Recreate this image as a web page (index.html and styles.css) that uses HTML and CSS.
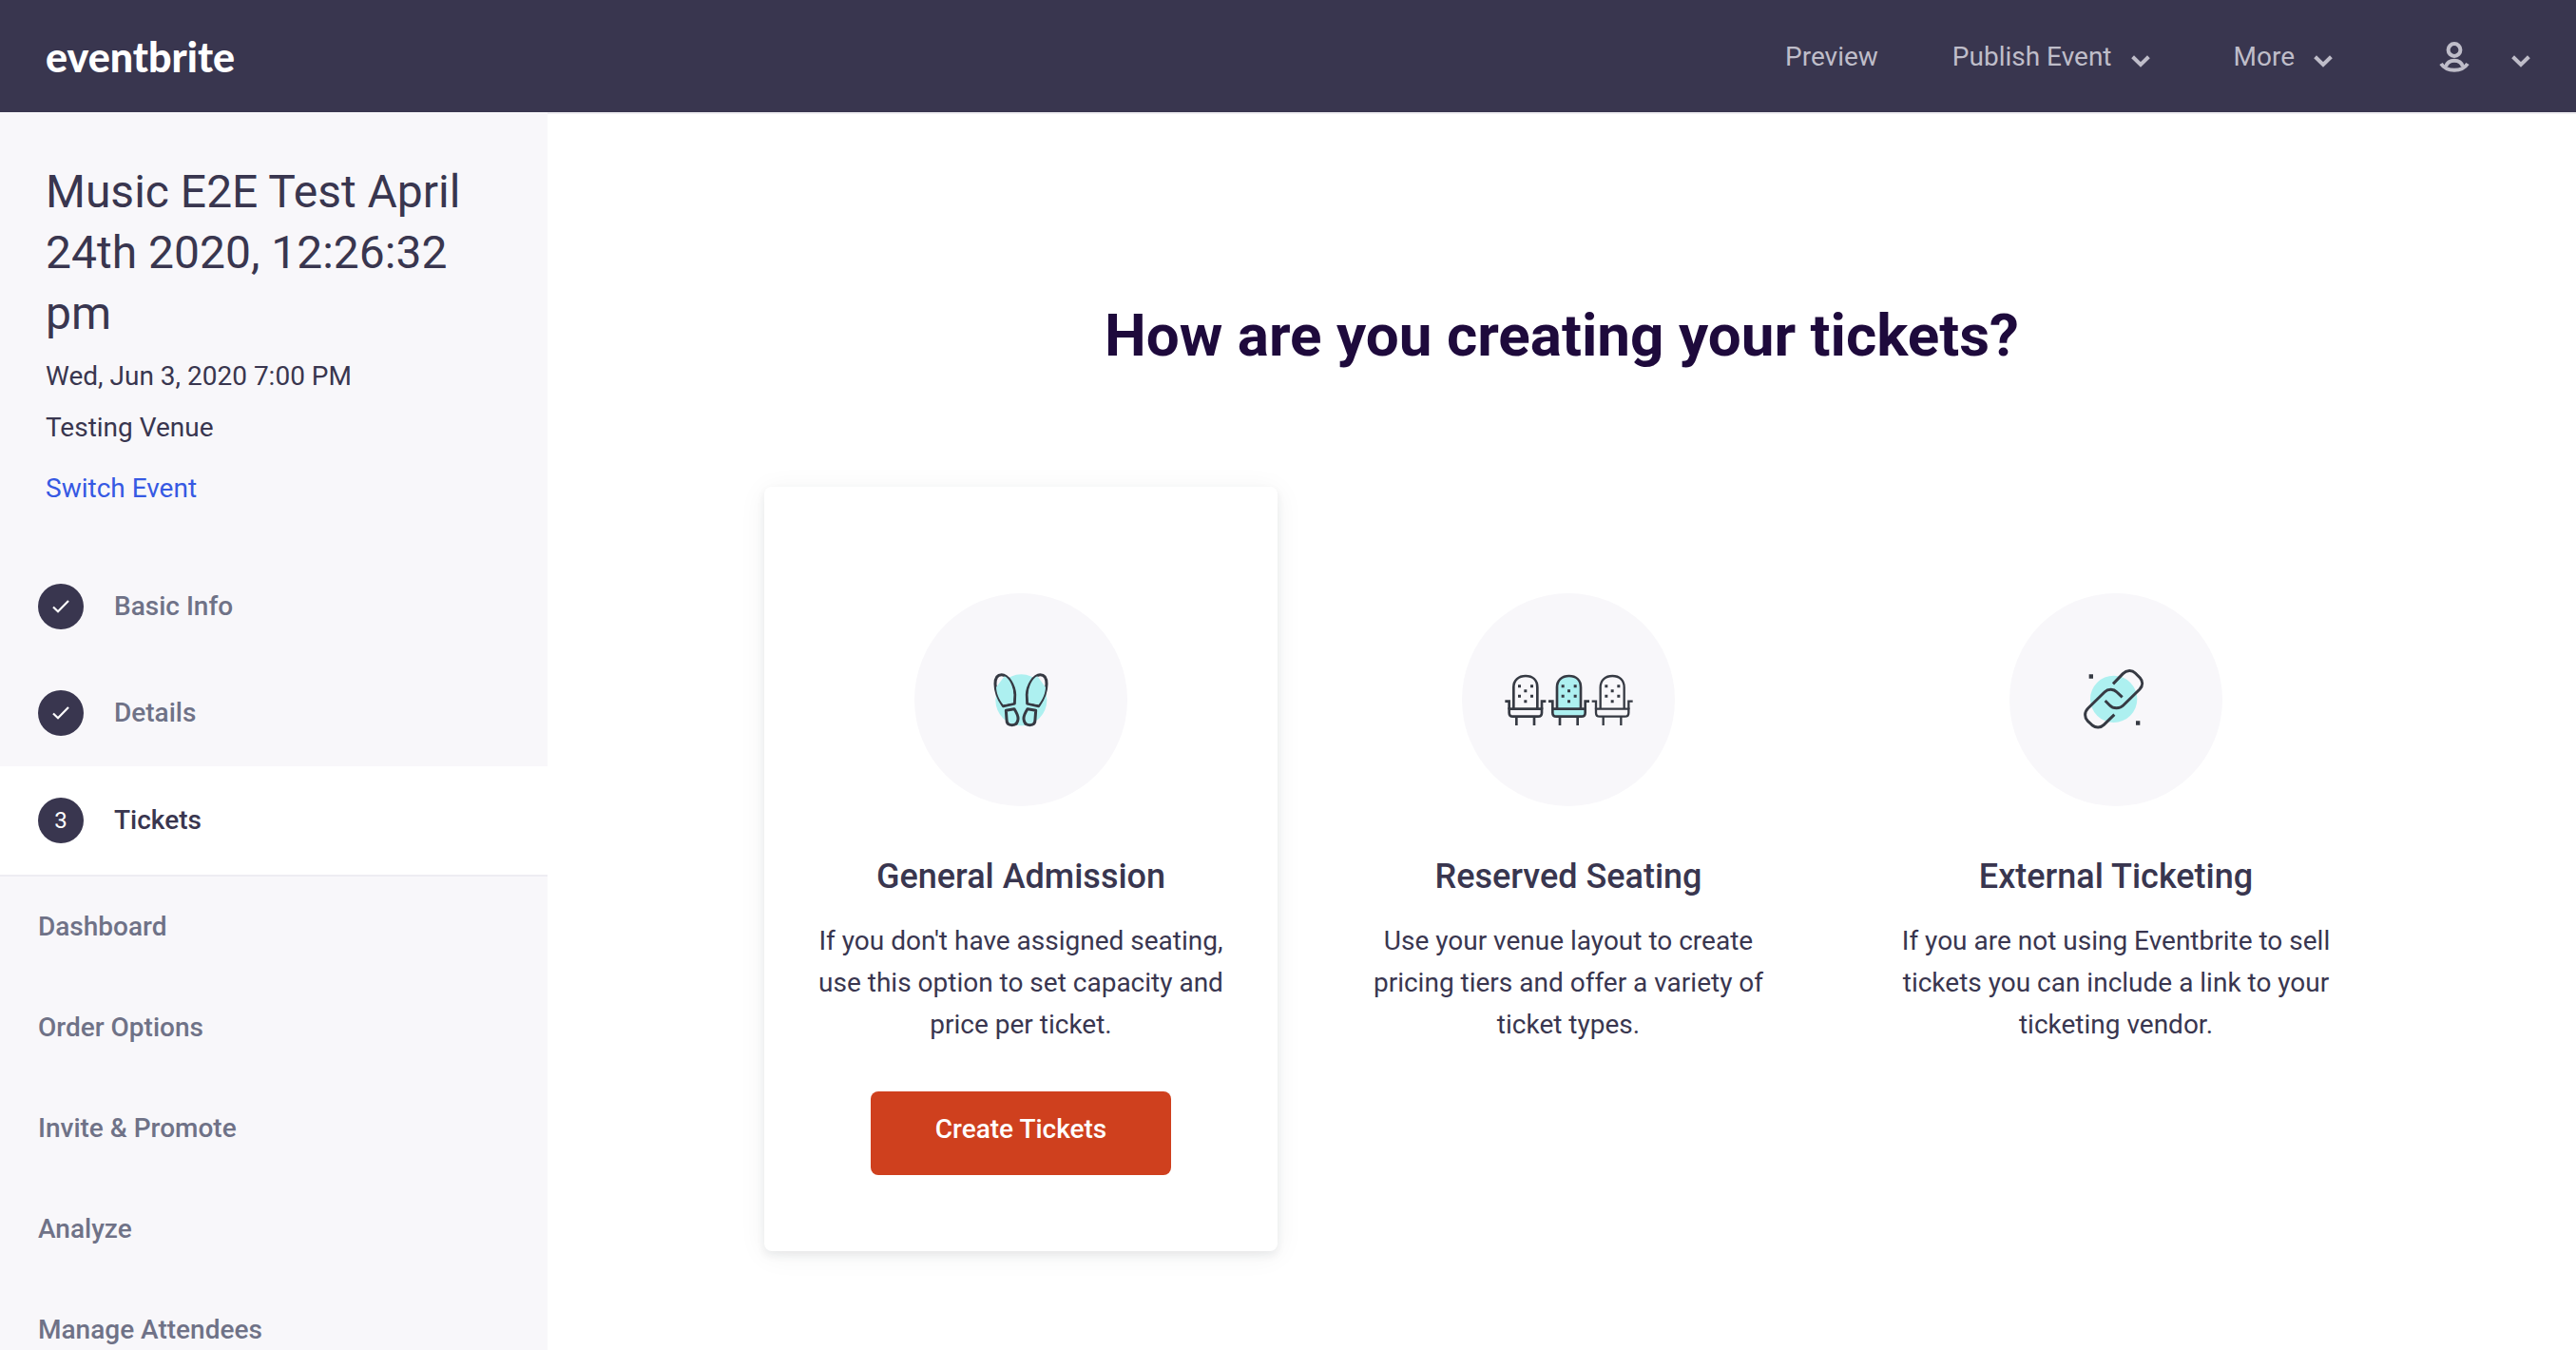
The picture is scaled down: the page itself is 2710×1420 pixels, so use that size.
FILE: index.html
```
<!DOCTYPE html>
<html lang="en">
<head>
  <meta charset="utf-8">
  <meta name="viewport" content="width=device-width, initial-scale=1">
  <title>Tickets | Eventbrite</title>
  <link rel="stylesheet" href="styles.css">
</head>
<body>
  <svg class="sprite" aria-hidden="true">
    <symbol id="chevron" viewBox="0 0 20 13">
      <path d="M1.600 1.800 L10 10 L18.400 1.800" fill="none" stroke="currentColor" stroke-width="4"/>
    </symbol>
    <symbol id="check" viewBox="0 0 18 14">
      <path d="M1 7.5 L6 12.2 L17 1" fill="none" stroke="currentColor" stroke-width="2.2"/>
    </symbol>
  </svg>

  <header class="topbar">
    <a class="logo" href="#">eventbrite</a>
    <nav class="topnav" aria-label="Event actions">
      <a class="topnav-item" href="#">Preview</a>
      <button class="topnav-item" type="button" aria-haspopup="true">Publish Event <svg class="chevron"><use href="#chevron"/></svg></button>
      <button class="topnav-item more" type="button" aria-haspopup="true">More <svg class="chevron"><use href="#chevron"/></svg></button>
      <button class="topnav-item account" type="button" aria-haspopup="true" aria-label="Account">
        <svg class="user" viewBox="0 0 32 34" fill="none" stroke="currentColor" stroke-width="4">
          <circle cx="16" cy="9.5" r="6.4"/>
          <path d="M2 24 C8 33 24 33 30 24"/>
          <path d="M7 27 C9.5 18.5 22.5 18.5 25 27"/>
        </svg>
        <svg class="chevron"><use href="#chevron"/></svg>
      </button>
    </nav>
  </header>

  <div class="layout">
    <aside class="sidebar">
      <div class="event">
        <h2 class="event-name">Music E2E Test April 24th 2020, 12:26:32 pm</h2>
        <p class="event-meta">Wed, Jun 3, 2020 7:00 PM</p>
        <p class="event-meta">Testing Venue</p>
        <a class="event-switch" href="#">Switch Event</a>
      </div>
      <nav aria-label="Event setup">
        <a class="step" href="#"><span class="badge"><svg class="check"><use href="#check"/></svg></span>Basic Info</a>
        <a class="step" href="#"><span class="badge"><svg class="check"><use href="#check"/></svg></span>Details</a>
        <a class="step step-active" href="#" aria-current="step"><span class="badge">3</span>Tickets</a>
        <a class="section" href="#">Dashboard</a>
        <a class="section" href="#">Order Options</a>
        <a class="section" href="#">Invite &amp; Promote</a>
        <a class="section" href="#">Analyze</a>
        <a class="section" href="#">Manage Attendees</a>
      </nav>
    </aside>

    <main class="main">
      <h1 class="question">How are you creating your tickets?</h1>
      <div class="options">
        <section class="option option-selected">
          <div class="picture">
            <svg width="90" height="90" viewBox="-3 2 270 270">
              <circle cx="133" cy="138" r="81" fill="#adf0f0"/>
              <g fill="none" stroke="#363a43" stroke-width="9" stroke-linejoin="round">
                <path fill="#f8f7fa" d="M76 157 C61 136 51 113 51 87 C51 67 58 58 71 58 C91 58 112 92 113 121 L112 149 Z"/>
                <path fill="#f8f7fa" d="M188 157 C203 136 213 113 213 87 C213 67 206 58 193 58 C173 58 152 92 151 121 L152 149 Z"/>
                <path fill="#adf0f0" stroke="none" d="M76 153 C62 134 55 118 54 98 L80 63 C96 69 108 95 109 121 L108 147 Z M188 153 C202 134 209 118 210 98 L184 63 C168 69 156 95 155 121 L156 147 Z"/>
                <path d="M85 171 L111 166 C118 177 124 186 123 198 C122 210 115 217 104 217 C93 217 87 210 87 199 Z"/>
                <path d="M179 171 L153 166 C146 177 140 186 141 198 C142 210 149 217 160 217 C171 217 177 210 177 199 Z"/>
              </g>
            </svg>
          </div>
          <h3 class="option-title">General Admission</h3>
          <p class="option-text">If you don't have assigned seating, use this option to set capacity and price per ticket.</p>
          <button class="create" type="button">Create Tickets</button>
        </section>

        <section class="option">
          <div class="picture">
            <svg width="160" height="90" viewBox="0 2 480 270">
              <defs>
                <g id="chair">
                  <path d="M67 166 V98 C67 75 83 62 105 62 C127 62 142 75 142 98 V166"/>
                  <path d="M53 166 H156 V178 C156 186 151 190 144 190 H65 C58 190 53 186 53 178 Z"/>
                  <path fill="none" d="M40 142 H53 V168 M169 142 H156 V168 M76 190 V218 M132 190 V218"/>
                  <path fill="#363a43" stroke="none" d="M81 90h9v9h-9z M120 90h9v9h-9z M100 105h9v9h-9z M81 121h9v9h-9z M120 121h9v9h-9z M100 138h9v9h-9z"/>
                </g>
              </defs>
              <g stroke="#363a43" stroke-width="8">
                <use href="#chair" fill="#f8f7fa"/>
                <use href="#chair" x="137" fill="#adf0f0"/>
                <use href="#chair" x="274" fill="#f8f7fa" stroke-width="7"/>
              </g>
            </svg>
          </div>
          <h3 class="option-title">Reserved Seating</h3>
          <p class="option-text">Use your venue layout to create pricing tiers and offer a variety of ticket types.</p>
        </section>

        <section class="option">
          <div class="picture">
            <svg width="100" height="90" viewBox="3 2 300 270">
              <circle cx="146" cy="135" r="74" fill="#adf0f0"/>
              <path d="M68 57h13v13h-13z M216 204h13v13h-13z" fill="#363a43"/>
              <g fill="none" stroke="#363a43" stroke-width="9">
                <path d="M144 87 L175 55 C187 43 204 43 214 53 L229 68 C238 78 239 92 228 104 L176 155 C166 165 145 167 133 154 L119 140"/>
                <path d="M148 184 L115 216 C105 226 89 226 79 218 L64 204 C53 193 53 176 65 164 L117 113 C129 101 146 103 156 113 L173 129"/>
              </g>
            </svg>
          </div>
          <h3 class="option-title">External Ticketing</h3>
          <p class="option-text">If you are not using Eventbrite to sell tickets you can include a link to your ticketing vendor.</p>
        </section>
      </div>
    </main>
  </div>
</body>
</html>
```

FILE: styles.css
```
* {
  box-sizing: border-box;
}

body {
  display: flex;
  flex-direction: column;
  height: 100vh;
  margin: 0;
  overflow: hidden;
  background: #fff;
  color: #39364f;
  font-family: Roboto, "Liberation Sans", sans-serif;
  font-size: 28px;
  line-height: 44px;
}

h1,
h2,
h3,
p {
  margin: 0;
}

a {
  color: inherit;
  text-decoration: none;
}

button {
  padding: 0;
  border: 0;
  background: none;
  color: inherit;
  font: inherit;
  cursor: pointer;
}

.sprite {
  display: none;
}

/* Top bar */
.topbar {
  display: flex;
  flex: none;
  align-items: center;
  justify-content: space-between;
  padding: 38px 48px 36px;
  background: #39364f;
}

.logo {
  color: #fff;
  font-family: Lato, sans-serif;
  font-size: 43px;
  font-weight: 900;
}

.topnav {
  display: flex;
  align-items: center;
  gap: 78px;
  color: #bfbdc9;
}

.topnav-item {
  display: flex;
  align-items: center;
  gap: 20px;
}

.more {
  margin-left: 10px;
}

.account {
  gap: 44px;
  margin-left: 34px;
}

.chevron {
  width: 20px;
  height: 13px;
  margin-top: 8px;
}

.user {
  width: 32px;
  height: 34px;
}

/* Sidebar */
.layout {
  display: flex;
  flex: 1;
  min-height: 0;
}

.sidebar {
  flex: none;
  width: 576px;
  overflow: hidden;
  background: #f8f7fa;
}

.event {
  padding: 52px 48px 46px;
}

.event-name {
  margin-bottom: 12px;
  font-size: 48px;
  font-weight: 400;
  line-height: 64px;
}

.event-meta {
  margin-bottom: 10px;
}

.event-switch {
  display: block;
  margin-top: 20px;
  color: #3659e3;
}

.step,
.section {
  display: flex;
  align-items: center;
  padding: 0 40px;
  color: #6f7287;
  font-weight: 500;
}

.step {
  gap: 32px;
  height: 112px;
}

.step-active {
  height: 116px;
  border-bottom: 2px solid #eeedf2;
  background: #fff;
  color: #39364f;
}

.section {
  height: 106px;
}

.badge {
  display: flex;
  align-items: center;
  justify-content: center;
  width: 48px;
  height: 48px;
  border-radius: 50%;
  background: #39364f;
  color: #fff;
  font-size: 24px;
  font-weight: 400;
}

.check {
  width: 18px;
  height: 14px;
}

/* Ticket type choice */
.main {
  flex: 1;
  min-width: 0;
  border-top: 2px solid #eeedf2;
}

.question {
  padding: 192px 0 118px;
  color: #1e0a3c;
  font-size: 62px;
  font-weight: 700;
  line-height: 82px;
  text-align: center;
}

.options {
  display: grid;
  grid-template-columns: repeat(3, minmax(0, 540px));
  gap: 36px;
  justify-content: center;
  padding-left: 14px;
}

.option {
  display: flex;
  flex-direction: column;
  align-items: center;
  padding: 112px 36px 80px;
  border-radius: 8px;
  text-align: center;
}

.option-selected {
  box-shadow: 0 4px 8px rgba(40, 44, 53, 0.08), 0 4px 30px rgba(40, 44, 53, 0.06);
}

.picture {
  display: flex;
  align-items: center;
  justify-content: center;
  width: 224px;
  height: 224px;
  margin-bottom: 50px;
  border-radius: 50%;
  background: #f8f7fa;
}

.option-title {
  margin-bottom: 22px;
  font-size: 36px;
  font-weight: 500;
  line-height: 48px;
}

.create {
  width: 316px;
  margin-top: 48px;
  padding: 18px 0 26px;
  border-radius: 8px;
  background: #cf401e;
  color: #fff;
  font-weight: 500;
}
```
